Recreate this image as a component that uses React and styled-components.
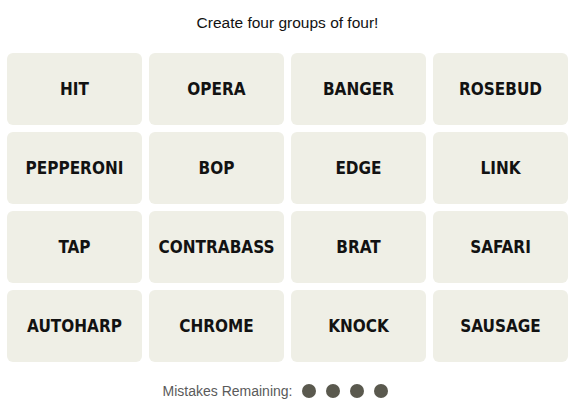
import React from "react";
import styled, { createGlobalStyle } from "styled-components";

const GlobalStyle = createGlobalStyle`
  body {
    margin: 0;
    background: #ffffff;
    font-family: "Liberation Sans", Arial, sans-serif;
  }
`;

const words = [
  "HIT", "OPERA", "BANGER", "ROSEBUD",
  "PEPPERONI", "BOP", "EDGE", "LINK",
  "TAP", "CONTRABASS", "BRAT", "SAFARI",
  "AUTOHARP", "CHROME", "KNOCK", "SAUSAGE",
];

const Page = styled.div`
  width: 577px;
  height: 404px;
  box-sizing: border-box;
  padding: 12px 9px 0 7px;
  display: flex;
  flex-direction: column;
  align-items: center;
`;

const Prompt = styled.p`
  margin: 0;
  height: 21px;
  line-height: 21px;
  font-family: "Liberation Sans", Arial, sans-serif;
  font-size: 15.5px;
  color: #121212;
`;

const Board = styled.div`
  margin-top: 20px;
  display: grid;
  grid-template-columns: repeat(4, 135px);
  grid-auto-rows: 72px;
  gap: 7px;
`;

const Tile = styled.button`
  border: none;
  border-radius: 6px;
  background: #efefe6;
  color: #121212;
  font-family: "DejaVu Sans Condensed", "Liberation Sans", sans-serif;
  font-weight: 700;
  font-size: 17px;
  text-transform: uppercase;
  display: flex;
  align-items: center;
  justify-content: center;
  padding: 0;
  cursor: pointer;
`;

const Mistakes = styled.div`
  margin-top: 21px;
  margin-right: 24px;
  display: flex;
  align-items: center;
  gap: 10px;
  font-family: "Liberation Sans", Arial, sans-serif;
  font-size: 14px;
  color: #5a5a5a;
`;

const Dots = styled.div`
  display: flex;
  gap: 10px;
`;

const Dot = styled.span`
  width: 14px;
  height: 14px;
  border-radius: 50%;
  background: #5a594e;
`;

export default function App() {
  return (
    <>
      <GlobalStyle />
      <Page>
        <Prompt>Create four groups of four!</Prompt>
        <Board>
          {words.map((w) => (
            <Tile key={w}>{w}</Tile>
          ))}
        </Board>
        <Mistakes>
          Mistakes Remaining:
          <Dots>
            {[0, 1, 2, 3].map((i) => (
              <Dot key={i} />
            ))}
          </Dots>
        </Mistakes>
      </Page>
    </>
  );
}
